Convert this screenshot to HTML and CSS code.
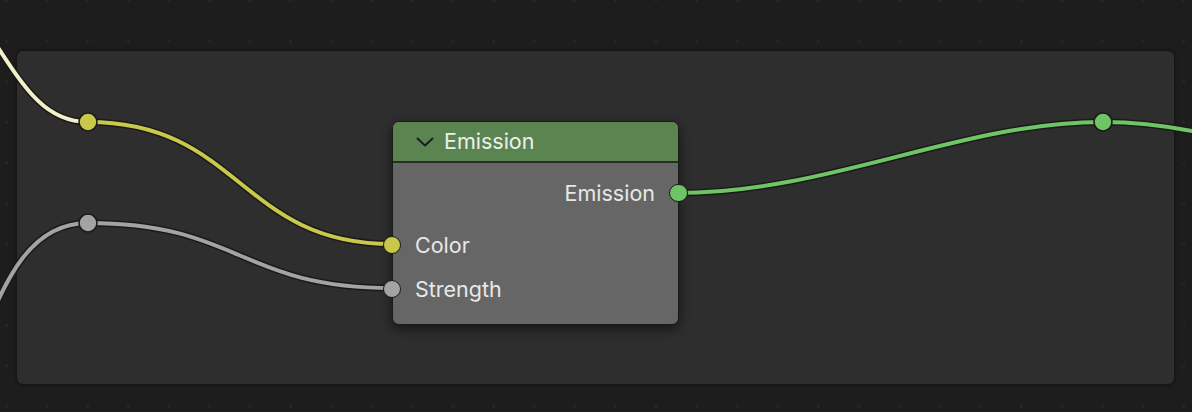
FILE: index.html
```html
<!DOCTYPE html>
<html>
<head>
<meta charset="utf-8">
<link rel="stylesheet" href="styles.css">
</head>
<body>
<div class="canvas">
  <div class="frame"></div>
  <svg class="wires" width="1192" height="412" viewBox="0 0 1192 412">
    <g fill="none" stroke-linecap="round">
      <path class="outline" d="M -20 20 C 20 80, 40 122, 88 122"/>
      <path class="wire" d="M -20 20 C 20 80, 40 122, 88 122" stroke="#f1f0c8"/>
      <path class="outline" d="M 88 122 C 240 122, 240 244, 392 244"/>
      <path class="wire" d="M 88 122 C 240 122, 240 244, 392 244" stroke="#c8c84a"/>
      <path class="outline" d="M -25 360 C 5 270, 35 223, 88 223"/>
      <path class="wire" d="M -25 360 C 5 270, 35 223, 88 223" stroke="#a3a3a3"/>
      <path class="outline" d="M 88 223 C 240 223, 240 288, 392 288"/>
      <path class="wire" d="M 88 223 C 240 223, 240 288, 392 288" stroke="#a3a3a3"/>
      <path class="outline" d="M 677 193 C 830 193, 960 122, 1103 122"/>
      <path class="wire" d="M 677 193 C 830 193, 960 122, 1103 122" stroke="#6fc466"/>
      <path class="outline" d="M 1103 122 C 1170 122, 1230 138, 1300 160"/>
      <path class="wire" d="M 1103 122 C 1170 122, 1230 138, 1300 160" stroke="#6fc466"/>
    </g>
    <circle cx="88" cy="122" r="9" fill="#c8c84a" stroke="#1a1a1a" stroke-width="1.6"/>
    <circle cx="88" cy="223" r="9" fill="#a3a3a3" stroke="#1a1a1a" stroke-width="1.6"/>
    <circle cx="1103" cy="122" r="9" fill="#6fc466" stroke="#1a1a1a" stroke-width="1.6"/>
  </svg>
  <div class="node">
    <div class="node-header">
      <svg class="chevron" width="18" height="10" viewBox="0 0 18 10"><path d="M1.5 1.5 L9 8.5 L16.5 1.5" fill="none" stroke="#1c1c1c" stroke-width="2" stroke-linecap="round" stroke-linejoin="round"/></svg>
      <span class="title">Emission</span>
    </div>
    <div class="node-body">
      <div class="row output">
        <span class="label">Emission</span>
        <span class="socket socket-out green"></span>
      </div>
      <div class="row input first-input">
        <span class="socket socket-in yellow"></span>
        <span class="label">Color</span>
      </div>
      <div class="row input">
        <span class="socket socket-in gray"></span>
        <span class="label">Strength</span>
      </div>
    </div>
  </div>
</div>
</body>
</html>
```

FILE: styles.css
```css
html, body {
  margin: 0;
  padding: 0;
  background: #1d1d1d;
}

.canvas {
  position: relative;
  width: 1192px;
  height: 412px;
  overflow: hidden;
  background-color: #1d1d1d;
  background-image: radial-gradient(circle, #262626 1.3px, transparent 1.6px);
  background-size: 40.6px 40.6px;
  background-position: -13.8px -19.8px;
  font-family: Inter, "DejaVu Sans", sans-serif;
}

.frame {
  position: absolute;
  left: 17px;
  top: 51px;
  width: 1157px;
  height: 333px;
  background: #2e2e2e;
  border-radius: 6px;
  box-shadow: 0 0 3px 1px rgba(0, 0, 0, 0.35);
}

.wires {
  position: absolute;
  left: 0;
  top: 0;
}

.wires .outline {
  stroke: #1a1a1a;
  stroke-width: 7;
}

.wires .wire {
  stroke-width: 4;
}

.node {
  position: absolute;
  left: 392px;
  top: 121px;
  width: 285px;
  height: 202px;
  border: 1px solid #1a1a1a;
  border-radius: 7px;
  background: #666666;
  box-shadow: 0 4px 12px rgba(0, 0, 0, 0.55);
  display: flex;
  flex-direction: column;
}

.node-header {
  height: 41px;
  background: #5a8551;
  border-bottom: 2px solid #2b2b2b;
  border-radius: 6px 6px 0 0;
  display: flex;
  align-items: center;
  gap: 10px;
  padding-left: 23px;
  box-sizing: border-box;
  flex: none;
}

.chevron {
  display: block;
}

.title {
  color: #eeeeee;
  font-size: 21.5px;
  line-height: 1;
  margin-top: 1px;
}

.node-body {
  display: flex;
  flex-direction: column;
  padding-top: 9px;
}

.row {
  position: relative;
  height: 44px;
  display: flex;
  align-items: center;
  color: #e8e8e8;
  font-size: 21.5px;
}

.row.output {
  justify-content: flex-end;
  padding-right: 23px;
  height: 42px;
  margin-bottom: 9px;
}

.row.input {
  padding-left: 22px;
}

.socket {
  position: absolute;
  top: 50%;
  width: 16.5px;
  height: 16.5px;
  margin-top: -9.5px;
  border-radius: 50%;
  border: 1.5px solid #1a1a1a;
}

.socket-out {
  right: -9.5px;
}

.socket-in {
  left: -10.5px;
}

.green { background: #6fc466; }
.yellow { background: #c8c84a; }
.gray { background: #a3a3a3; }
```
